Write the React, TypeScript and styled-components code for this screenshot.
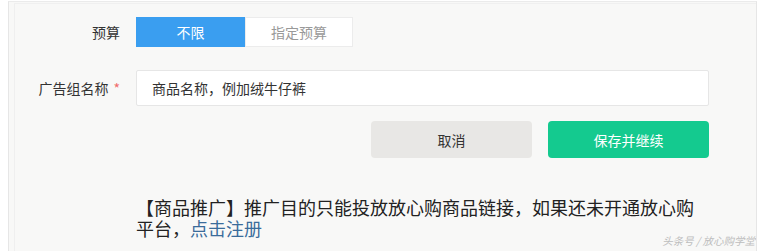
import * as React from 'react';
import styled, { createGlobalStyle } from 'styled-components';

const GlobalStyle = createGlobalStyle`
  html, body {
    margin: 0;
    padding: 0;
    background: #ffffff;
    font-family: "Noto Sans CJK SC", "Noto Sans", sans-serif;
  }
`;

const Frame = styled.div`
  position: relative;
  box-sizing: border-box;
  margin: 1px 0 0 8px;
  width: 749px;
  height: 250px;
  border-left: 1px solid #e6e6e6;
  border-top: 1px solid #ebebeb;
  border-right: 1px solid #e6e6e6;
  background: #f8f8f7;
  overflow: hidden;
`;

const Inner = styled.div`
  box-sizing: border-box;
  height: 100%;
  margin-left: 5px;
  margin-top: 1px;
  border-left: 1px solid #efefef;
  border-top: 1px solid #f0f0f0;
  padding-top: 13px;
`;

const Form = styled.div`
  display: grid;
  grid-template-columns: 105px 573px;
  column-gap: 16px;
  align-items: center;
`;

const Label = styled.div<{ $top?: number }>`
  text-align: right;
  font-size: 14px;
  color: #333;
  margin-top: ${(p) => p.$top ?? 0}px;
  white-space: nowrap;
`;

const Required = styled.span`
  color: #f06b6b;
  margin-left: 5px;
`;

const Segments = styled.div`
  display: flex;
  height: 30px;
`;

const Segment = styled.div<{ $active?: boolean }>`
  box-sizing: border-box;
  width: ${(p) => (p.$active ? 109 : 108)}px;
  display: flex;
  align-items: center;
  justify-content: center;
  font-size: 14px;
  background: ${(p) => (p.$active ? '#3a9ef0' : '#ffffff')};
  color: ${(p) => (p.$active ? '#ffffff' : '#999999')};
  border: 1px solid ${(p) => (p.$active ? '#3a9ef0' : '#ececec')};
`;

const Input = styled.div`
  box-sizing: border-box;
  margin-top: 23px;
  height: 36px;
  display: flex;
  align-items: center;
  padding-left: 15px;
  background: #ffffff;
  border: 1px solid #e6e6e6;
  border-radius: 2px;
  font-size: 14px;
  color: #333;
`;

const Actions = styled.div`
  grid-column: 2;
  display: flex;
  justify-content: flex-end;
  gap: 16px;
  margin-top: 15px;
`;

const Button = styled.div<{ $primary?: boolean }>`
  width: 161px;
  height: 37px;
  border-radius: 4px;
  display: flex;
  align-items: center;
  justify-content: center;
  font-size: 14px;
  background: ${(p) => (p.$primary ? '#14ca8f' : '#e8e7e5')};
  color: ${(p) => (p.$primary ? '#ffffff' : '#333333')};
`;

const Notice = styled.div`
  grid-column: 2;
  margin-top: 39px;
  display: flex;
  flex-direction: column;
  align-items: flex-start;
  font-size: 18px;
  line-height: 21px;
  color: #222;
`;

const NoticeLine = styled.div`
  display: flex;
  white-space: nowrap;
`;

const Link = styled.a`
  color: #3a6c9b;
  text-decoration: none;
`;

const Watermark = styled.div`
  position: absolute;
  right: 1px;
  bottom: 3px;
  font-size: 10.5px;
  color: #bdbdbd;
  font-style: italic;
`;

export default function App() {
  return (
    <>
      <GlobalStyle />
      <Frame>
        <Inner>
          <Form>
            <Label>预算</Label>
            <Segments>
              <Segment $active>不限</Segment>
              <Segment>指定预算</Segment>
            </Segments>
            <Label $top={23}>
              广告组名称<Required>*</Required>
            </Label>
            <Input>商品名称，例加绒牛仔裤</Input>
            <Actions>
              <Button>取消</Button>
              <Button $primary>保存并继续</Button>
            </Actions>
            <Notice>
              <NoticeLine>【商品推广】推广目的只能投放放心购商品链接，如果还未开通放心购</NoticeLine>
              <NoticeLine>
                <span>平台，</span>
                <Link>点击注册</Link>
              </NoticeLine>
            </Notice>
          </Form>
        </Inner>
        <Watermark>头条号 / 放心购学堂</Watermark>
      </Frame>
    </>
  );
}
